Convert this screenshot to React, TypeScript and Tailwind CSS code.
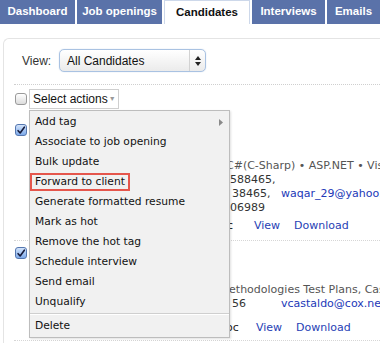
import React from "react";

const TABS = [
  { label: "Dashboard", w: "w-[75px]" },
  { label: "Job openings", w: "w-[85px]" },
  { label: "Candidates", w: "w-[86px]", active: true },
  { label: "Interviews", w: "w-[73px]" },
  { label: "Emails", w: "flex-1" },
];

const ACTIONS = [
  "Add tag",
  "Associate to job opening",
  "Bulk update",
  "Forward to client",
  "Generate formatted resume",
  "Mark as hot",
  "Remove the hot tag",
  "Schedule interview",
  "Send email",
  "Unqualify",
];

function Checkbox({ checked }: { checked?: boolean }) {
  if (checked) {
    return (
      <div className="w-[12px] h-[12px] rounded-[3px] border border-[#5577b0] bg-gradient-to-b from-[#d2e3fa] to-[#7eaaea] flex items-center justify-center shrink-0">
        <svg viewBox="0 0 12 12" className="w-[11px] h-[11px]">
          <path d="M2.5 6.2 L5 9 L10 2" fill="none" stroke="#151a3a" strokeWidth="1.9" strokeLinecap="round" strokeLinejoin="round" />
        </svg>
      </div>
    );
  }
  return <div className="w-[12px] h-[12px] rounded-[3px] border border-[#9a9a9a] bg-gradient-to-b from-white to-[#dcdcdc] shrink-0" />;
}

function ActionMenu() {
  return (
    <div className="absolute left-[29px] top-[110px] w-[201px] bg-[#f1f1f1] border border-[#bdbdbd] shadow-[1px_1px_2px_rgba(0,0,0,0.12)] py-[1px] text-[10.7px] text-[#111]">
      {ACTIONS.map((a, i) => (
        <div key={a} className="h-[20px] pl-[5px] pr-[6px] flex items-center justify-between">
          {a === "Forward to client" ? (
            <span className="-ml-[5px] border-2 border-[#e5564c] px-[3px] h-[18px] flex items-center">{a}</span>
          ) : (
            <span>{a}</span>
          )}
          {i === 0 && (
            <svg viewBox="0 0 4 7" className="w-[4px] h-[7px]">
              <path d="M0 0 L4 3.5 L0 7 Z" fill="#8a8a8a" />
            </svg>
          )}
        </div>
      ))}
      <div className="h-[1px] bg-[#cfcfcf] mt-[1px]" />
      <div className="h-[1px] bg-white mb-[1px]" />
      <div className="h-[20px] pl-[5px] flex items-center">Delete</div>
    </div>
  );
}

export default function App() {
  return (
    <div className="w-[380px] h-[343px] overflow-hidden bg-white relative font-['DejaVu_Sans',sans-serif] text-[#222]">
      <div className="flex h-[24px] gap-[2px] font-['Liberation_Sans',sans-serif]">
        {TABS.map((t) => (
          <div
            key={t.label}
            className={`${t.w} flex items-center justify-center whitespace-nowrap text-[11.5px] font-bold ${
              t.active
                ? "bg-white text-[#111] border border-b-0 border-[#cdd8ea]"
                : "bg-[#5a72a9] text-white"
            }`}
          >
            {t.label}
          </div>
        ))}
      </div>

      <div className="mt-[14px] ml-[3px] h-[310px] border-l border-t border-[#e4e4e4] rounded-tl-[6px]">
        <div className="pt-[10px] flex items-center">
          <span className="ml-[18px] w-[37px] text-[12px] font-['Liberation_Sans',sans-serif] text-[#333]">View:</span>
          <div className="w-[147px] h-[23px] rounded-[5px] border border-[#a9c2e2] bg-gradient-to-b from-white to-[#ebebeb] flex items-center shadow-[0_0_1px_rgba(120,160,210,0.6)]">
            <span className="flex-1 pl-[7px] text-[12px] font-['Liberation_Sans',sans-serif] text-[#111]">All Candidates</span>
            <div className="w-[16px] h-full border-l border-[#d2d2d2] flex items-center justify-center">
              <svg viewBox="0 0 6 10" className="w-[6px] h-[10px]">
                <path d="M0 4 L3 0 L6 4 Z M0 6 L3 10 L6 6 Z" fill="#222" />
              </svg>
            </div>
          </div>
        </div>

        <div className="mt-[12px] ml-[10px] border-t border-dotted border-[#cfcfcf]" />

        <div className="mt-[4px] ml-[11px] flex items-center gap-[2px]">
          <Checkbox />
          <div className="h-[20px] border border-[#cfcfcf] bg-white flex items-center pl-[3px] pr-[2px] whitespace-nowrap text-[12px] font-['Liberation_Sans',sans-serif] text-[#111]">
            Select actions
            <span className="ml-[1px] text-[7px] text-[#999]">▼</span>
          </div>
        </div>

        {/* row 1 */}
        <div className="ml-[10px] border-b border-dotted border-[#d6d6d6] flex h-[132px]">
          <div className="ml-[1px] mt-[15px]">
            <Checkbox checked />
          </div>
          <div className="ml-[199px] mt-[50px] text-[11px] leading-[14px] whitespace-nowrap">
            <div className="text-[#555]">C#(C-Sharp) • ASP.NET • Visual Studio</div>
            <div className="flex">
              <div className="w-[55px] pl-[4px] text-[#333]">
                <div>588465,</div>
                <div className="pl-[2px]">38465,</div>
                <div>06989</div>
              </div>
              <div className="mt-[14px] text-[#2238b8]">waqar_29@yahoo.com</div>
            </div>
            <div className="mt-[4px] flex">
              <span className="w-[28px] pl-[1px] text-[#222]">c</span>
              <span className="w-[40px] text-[#2741b5]">View</span>
              <span className="text-[#2741b5]">Download</span>
            </div>
          </div>
        </div>

        {/* row 2 */}
        <div className="ml-[10px] border-b border-dotted border-[#d6d6d6] flex h-[100px]">
          <div className="ml-[1px] mt-[6px]">
            <Checkbox checked />
          </div>
          <div className="ml-[199px] mt-[42px] text-[11px] leading-[14px] whitespace-nowrap">
            <div className="text-[#555]">lethodologies Test Plans, Case</div>
            <div className="flex">
              <div className="w-[55px] pl-[6px] text-[#333]">56</div>
              <div className="text-[#2238b8]">vcastaldo@cox.net</div>
            </div>
            <div className="mt-[10px] flex">
              <span className="w-[30px] text-[#222]">oc</span>
              <span className="w-[40px] text-[#2741b5]">View</span>
              <span className="text-[#2741b5]">Download</span>
            </div>
          </div>
        </div>
      </div>

      <ActionMenu />
    </div>
  );
}
